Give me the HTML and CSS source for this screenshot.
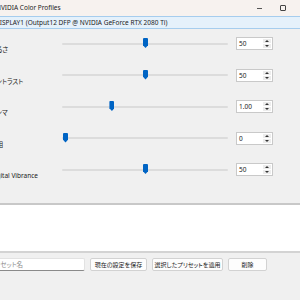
FILE: index.html
```html
<html lang="ja">
<head>
    <meta charset="UTF-8">
    <meta name="viewport" content="width=device-width, initial-scale=1.0">
    <title>NVIDIA Color Profiles</title>
    <link rel="stylesheet" href="styles.css">
</head>
<body>
    <div class="app">
        <div class="titlebar">
            <span class="title">NVIDIA Color Profiles</span>
            <div class="caption">
                <span class="cap-btn"><i class="min"></i></span>
                <span class="cap-btn"><i class="max"></i></span>
                <span class="cap-btn"><i class="close">✕</i></span>
            </div>
        </div>

        <div class="combo">DISPLAY1 (Output12 DFP @ NVIDIA GeForce RTX 2080 Ti)</div>

        <div class="sliders">
            <div class="row">
                <span class="label">明るさ</span>
                <div class="slider"><div class="track"></div><div class="thumb" style="left: calc((100% - 6px) * 0.5 + 1px)"></div></div>
                <div class="spin"><span class="val">50</span><div class="btns"><span class="up"></span><span class="down"></span></div></div>
            </div>
            <div class="row">
                <span class="label">コントラスト</span>
                <div class="slider"><div class="track"></div><div class="thumb" style="left: calc((100% - 6px) * 0.5 + 1px)"></div></div>
                <div class="spin"><span class="val">50</span><div class="btns"><span class="up"></span><span class="down"></span></div></div>
            </div>
            <div class="row">
                <span class="label">ガンマ</span>
                <div class="slider"><div class="track"></div><div class="thumb" style="left: calc((100% - 6px) * 0.29 + 1px)"></div></div>
                <div class="spin"><span class="val">1.00</span><div class="btns"><span class="up"></span><span class="down"></span></div></div>
            </div>
            <div class="row">
                <span class="label">色相</span>
                <div class="slider"><div class="track"></div><div class="thumb" style="left: calc((100% - 6px) * 0 + 1px)"></div></div>
                <div class="spin"><span class="val">0</span><div class="btns"><span class="up"></span><span class="down"></span></div></div>
            </div>
            <div class="row">
                <span class="label">Digital Vibrance</span>
                <div class="slider"><div class="track"></div><div class="thumb" style="left: calc((100% - 6px) * 0.5 + 1px)"></div></div>
                <div class="spin"><span class="val">50</span><div class="btns"><span class="up"></span><span class="down"></span></div></div>
            </div>
        </div>

        <div class="preset-list"></div>

        <div class="actions">
            <input class="preset-name" type="text" placeholder="プリセット名">
            <button class="btn save">現在の設定を保存</button>
            <button class="btn apply">選択したプリセットを適用</button>
            <button class="btn delete">削除</button>
        </div>
    </div>
</body>
</html>
```

FILE: styles.css
```css
* {
    margin: 0;
    padding: 0;
    box-sizing: border-box;
}

body {
    background-color: #f0f0f0;
    overflow: hidden;
    font-family: 'Noto Sans', 'Noto Sans CJK JP', sans-serif;
    font-feature-settings: "palt";
    font-size: 6.5px;
    color: #1b1b1b;
}

.app {
    margin-left: -16px;
    width: 333px;
}

/* title bar */
.titlebar {
    height: 16px;
    background-color: #f7f2ef;
    display: flex;
    align-items: center;
}

.title {
    flex: 1;
    padding-left: 12px;
    line-height: 16px;
}

.caption {
    display: flex;
    height: 16px;
}

.cap-btn {
    width: 23px;
    display: flex;
    align-items: center;
    justify-content: center;
}

.min {
    width: 5px;
    height: 1px;
    background-color: #555;
}

.max {
    width: 6px;
    height: 6px;
    border: 1px solid #444;
    border-radius: 1px;
}

.close {
    font-style: normal;
    font-size: 7px;
    color: #444;
}

/* display selector */
.combo {
    height: 13px;
    line-height: 11px;
    padding-left: 10px;
    background-color: #e5f1fb;
    border: 1px solid #a6cdee;
}

/* slider rows */
.sliders {
    margin-top: 8px;
    display: flex;
    flex-direction: column;
    gap: 18.5px;
}

.row {
    display: grid;
    grid-template-columns: 70px 166px 37px;
    column-gap: 8px;
    align-items: center;
    height: 13px;
}

.label {
    padding-left: 6px;
    line-height: 11px;
    white-space: nowrap;
    margin-top: 6px;
    margin-bottom: -6px;
}

.slider {
    position: relative;
    height: 13px;
    display: flex;
    align-items: center;
}

.track {
    width: 100%;
    height: 2px;
    background-color: #dcdcdc;
    border-radius: 1px;
}

.thumb {
    position: absolute;
    top: 1px;
    width: 5px;
    height: 10px;
    background-color: #0064c4;
    border-radius: 1px 1px 0 0;
    clip-path: polygon(0 0, 100% 0, 100% 72%, 50% 100%, 0 72%);
}

.spin {
    height: 13px;
    background-color: #fff;
    border: 1px solid #c9c9c9;
    display: flex;
}

.val {
    flex: 1;
    padding-left: 2px;
    line-height: 11px;
}

.btns {
    width: 8px;
    margin: 1px 1px 1px 0;
    display: flex;
    flex-direction: column;
    gap: 1px;
}

.btns span {
    flex: 1;
    background-color: #ececec;
    display: flex;
    align-items: center;
    justify-content: center;
}

.btns span::after {
    content: "";
    border-left: 2px solid transparent;
    border-right: 2px solid transparent;
}

.btns .up::after {
    border-bottom: 2px solid #333;
}

.btns .down::after {
    border-top: 2px solid #333;
}

/* preset list */
.preset-list {
    margin-top: 27px;
    height: 50px;
    background-color: #fff;
    border-top: 2px solid #c8c8c8;
    border-bottom: 2px solid #d3d3d3;
}

.actions {
    margin-top: 5px;
    display: flex;
    gap: 5px;
    height: 13px;
}

.preset-name {
    width: 101px;
    height: 13px;
    padding-left: 4px;
    font: inherit;
    background-color: #fff;
    border: 1px solid #e2e2e2;
    border-bottom: 1px solid #8a8a8a;
    border-radius: 2px;
    outline: none;
}

.preset-name::placeholder {
    color: #8c8c8c;
}

.btn {
    height: 13px;
    font: inherit;
    font-size: 6px;
    color: #1b1b1b;
    background-color: #fdfdfd;
    border: 1px solid #d2d2d2;
    border-radius: 2px;
    white-space: nowrap;
}

.save {
    width: 57px;
}

.apply {
    width: 71px;
}

.delete {
    width: 39px;
}
```
